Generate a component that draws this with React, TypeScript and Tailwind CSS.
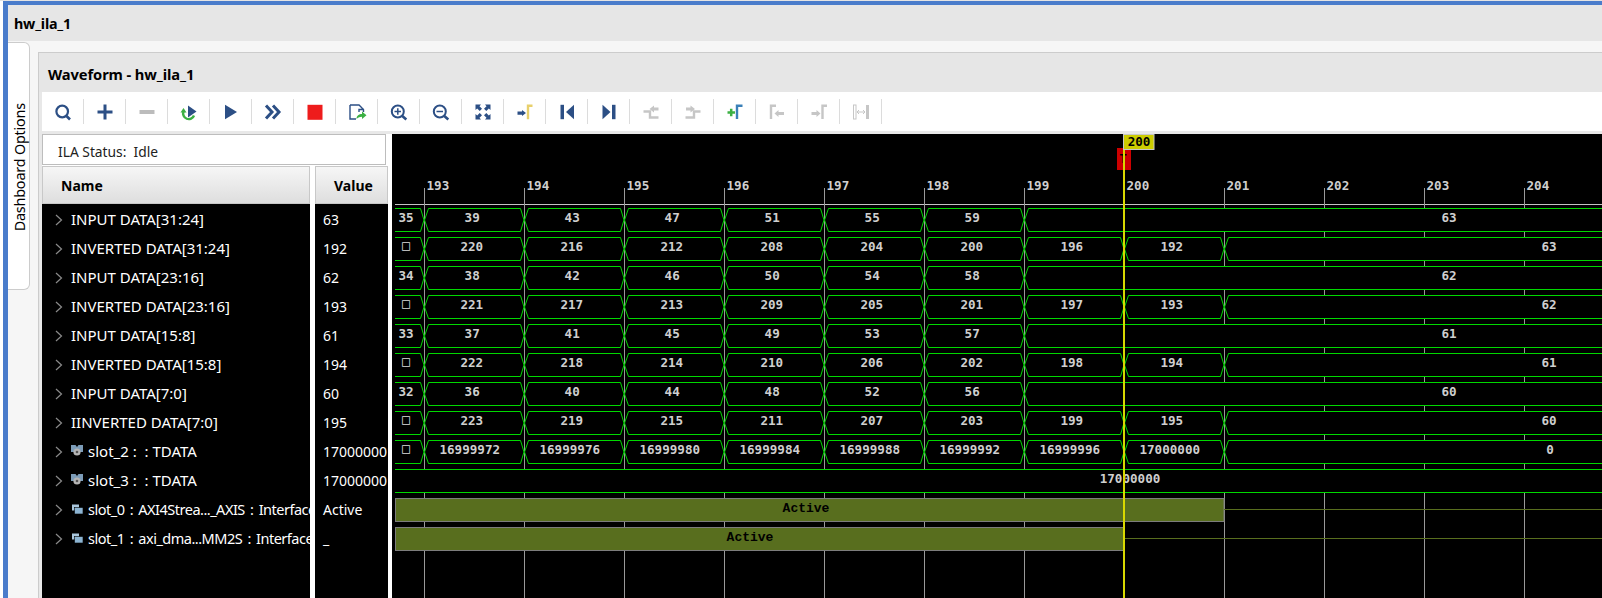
import React from "react";

const NAVY = "#2c4f85";
const GRAY = "#c6c6c6";
const GREEN = "#3cb043";

const icons: React.ReactNode[] = [
  <g key="a" fill="none" stroke={NAVY}><circle cx="11.2" cy="11.5" r="5.8" strokeWidth="2.2" /><path d="M15.5 16L19 19.5" strokeWidth="2.6" /></g>,
  <path key="b" d="M4.5 12H19.5M12 4.5V19.5" stroke={NAVY} strokeWidth="3" fill="none" />,
  <path key="c" d="M4.5 12H19.5" stroke="#bcbcbc" strokeWidth="4" fill="none" />,
  <g key="d"><path d="M11 5.5L19.5 11.5L11 17.5Z" fill={NAVY} /><path d="M6.5 11.5A5.6 5.6 0 1 0 17 15.5" stroke={GREEN} strokeWidth="2.4" fill="none" /><path d="M3.5 12.5L9.5 12.5L6.5 8Z" fill={GREEN} /></g>,
  <path key="e" d="M6 4.8L18 12L6 19.2Z" fill={NAVY} />,
  <path key="f" d="M5 5.5L11 12L5 18.5M12 5.5L18 12L12 18.5" stroke={NAVY} strokeWidth="3" fill="none" />,
  <rect key="g" x="4.5" y="4.8" width="15" height="15" fill="#ee1c1c" />,
  <g key="h"><path d="M14 12V9.5H19M5 5H14L18.5 9.5V12M11 19H5V5" stroke={NAVY} strokeWidth="1.4" fill="none" /><path d="M11.5 19C11.5 15.5 14 14 17 14V11.5L21.5 15.3L17 19V16.8C15 16.8 13 17.5 11.5 19Z" fill={GREEN} /></g>,
  <g key="i" fill="none" stroke={NAVY}><circle cx="10.8" cy="11.5" r="6" strokeWidth="2" /><path d="M15.3 16L19.3 19.5" strokeWidth="2.6" /><path d="M7.5 11.5H14M10.8 8.2V14.8" strokeWidth="1.5" /></g>,
  <g key="j" fill="none" stroke={NAVY}><circle cx="10.8" cy="11.5" r="6" strokeWidth="2" /><path d="M15.3 16L19.3 19.5" strokeWidth="2.6" /><path d="M7.5 11.5H14" strokeWidth="1.5" /></g>,
  <path key="k" fill={NAVY} d="M4.5 4.5H10L8.5 6.2L11 8.7L8.7 11L6.2 8.5L4.5 10ZM19.5 4.5H14L15.5 6.2L13 8.7L15.3 11L17.8 8.5L19.5 10ZM4.5 19.5H10L8.5 17.8L11 15.3L8.7 13L6.2 15.5L4.5 14ZM19.5 19.5H14L15.5 17.8L13 15.3L15.3 13L17.8 15.5L19.5 14Z" />,
  <g key="l"><path d="M4.5 11.5H9V10L13 13L9 16V14.7H4.5Z" fill={NAVY} /><path d="M15 19.2V5.8H19.5" stroke="#e8d06c" strokeWidth="2.4" fill="none" /></g>,
  <g key="m" fill={NAVY}><rect x="5.5" y="4.8" width="3.5" height="14.4" /><path d="M19 4.8V19.2L11 12Z" /></g>,
  <g key="n" fill={NAVY}><path d="M5.5 4.8V19.2L13.5 12Z" /><rect x="15" y="4.8" width="3.5" height="14.4" /></g>,
  <g key="o" fill={GRAY}><path d="M4.5 11.5H11V17.5H19.5" stroke={GRAY} strokeWidth="2.4" fill="none" /><path d="M10.5 9L15 5.5V7.5H19.5V10.5H15V12.5Z" /></g>,
  <g key="p" fill={GRAY}><path d="M4.5 17.5H13V11.5H19.5" stroke={GRAY} strokeWidth="2.4" fill="none" /><path d="M14 9L9.5 5.5V7.5H5V10.5H9.5V12.5Z" /></g>,
  <g key="q"><path d="M4.5 12.5H12M8.2 8.8V16.2" stroke={GREEN} strokeWidth="2.5" fill="none" /><path d="M14 19V5.8H19.5" stroke="#3a80b8" strokeWidth="2.4" fill="none" /></g>,
  <g key="r" fill={GRAY}><path d="M6 19V5.8H11" stroke={GRAY} strokeWidth="2.4" fill="none" /><path d="M9.5 13.5L13.5 10V12H19V15H13.5V17Z" /></g>,
  <g key="s" fill={GRAY}><path d="M4.5 12H9.5V10L13.5 13.5L9.5 17V15H4.5Z" /><path d="M15.5 19V5.8H20" stroke={GRAY} strokeWidth="2.4" fill="none" /></g>,
  <g key="t"><rect x="4.5" y="5" width="2.5" height="14" fill="none" stroke={GRAY} strokeWidth="1" /><rect x="17" y="5" width="3" height="14" fill={GRAY} /><path d="M8 12H16M10 10L8 12L10 14M14 10L16 12L14 14" stroke={GRAY} strokeWidth="1" fill="none" /></g>,
];

const names: [string, "none" | "data" | "intf"][] = [
  ["INPUT DATA[31:24]", "none"],
  ["INVERTED DATA[31:24]", "none"],
  ["INPUT DATA[23:16]", "none"],
  ["INVERTED DATA[23:16]", "none"],
  ["INPUT DATA[15:8]", "none"],
  ["INVERTED DATA[15:8]", "none"],
  ["INPUT DATA[7:0]", "none"],
  ["IINVERTED DATA[7:0]", "none"],
  ["slot_2 :  : TDATA", "data"],
  ["slot_3 :  : TDATA", "data"],
  ["slot_0 : AXI4Strea..._AXIS : Interface", "intf"],
  ["slot_1 : axi_dma...MM2S : Interface", "intf"],
];
const values = ["63", "192", "62", "193", "61", "194", "60", "195", "17000000", "17000000", "Active", "_"];

function Chevron() {
  return (
    <svg width="8" height="12" viewBox="0 0 8 12" className="flex-none">
      <path d="M1 1L6.5 6L1 11" stroke="#8a8a8a" strokeWidth="1.2" fill="none" />
    </svg>
  );
}

function DataIcon() {
  return (
    <svg width="12" height="12" viewBox="0 0 12 12" className="flex-none -mt-[1px]">
      <path d="M0 0H4.5L6 2L7.5 0H12V7H0Z" fill="#7c9cb8" />
      <circle cx="6" cy="7" r="3.6" fill="#b5b5b5" />
      <circle cx="6" cy="7" r="1.3" fill="#555" />
    </svg>
  );
}

function IntfIcon() {
  return (
    <svg width="12" height="12" viewBox="0 0 12 12" className="flex-none">
      <rect x="1" y="0.5" width="7" height="6" fill="#a9c6dc" />
      <rect x="3.5" y="3.5" width="8.5" height="6.5" fill="#8cb4d2" stroke="#000" strokeWidth="0.6" />
    </svg>
  );
}

type Row = { first: string; vals: string[]; last: string; lastFrom: number; lastX: number };
const seq = (a: number, step: number, n: number) => Array.from({ length: n }, (_, i) => String(a + i * step));

const rows: Row[] = [
  { first: "35", vals: seq(39, 4, 6), last: "63", lastFrom: 1024, lastX: 1449 },
  { first: "□", vals: seq(220, -4, 8), last: "63", lastFrom: 1224, lastX: 1549 },
  { first: "34", vals: seq(38, 4, 6), last: "62", lastFrom: 1024, lastX: 1449 },
  { first: "□", vals: seq(221, -4, 8), last: "62", lastFrom: 1224, lastX: 1549 },
  { first: "33", vals: seq(37, 4, 6), last: "61", lastFrom: 1024, lastX: 1449 },
  { first: "□", vals: seq(222, -4, 8), last: "61", lastFrom: 1224, lastX: 1549 },
  { first: "32", vals: seq(36, 4, 6), last: "60", lastFrom: 1024, lastX: 1449 },
  { first: "□", vals: seq(223, -4, 8), last: "60", lastFrom: 1224, lastX: 1549 },
  { first: "□", vals: seq(16999972, 4, 8), last: "0", lastFrom: 1224, lastX: 1550 },
];

const W = "#00d800";
const LABEL = "font-['DejaVu_Sans_Mono',monospace] font-bold text-[12.6px] fill-[#cfcfcf]";
const BOX = "font-['DejaVu_Sans_Mono',monospace] text-[13.5px] fill-[#dcdcdc]";
const ACTIVE = "font-['Liberation_Mono',monospace] font-bold text-[13px] fill-black";

function Bus({ r, i }: { r: Row; i: number }) {
  const top = 208.5 + 29 * i;
  const bot = top + 23;
  const mid = top + 11.5;
  const base = 222 + 29 * i;
  return (
    <g>
      <path d={`M395 ${top}H420.5L424 ${mid}L420.5 ${bot}H395`} fill="#000" stroke={W} />
      <text x="406" y={r.first === "□" ? base - 1 : base} textAnchor="middle" className={r.first === "□" ? BOX : LABEL}>{r.first}</text>
      {r.vals.map((v, k) => {
        const a = 424 + k * 100;
        const b = a + 100;
        return (
          <g key={k}>
            <path d={`M${a + 0.5} ${mid}L${a + 4.5} ${top}H${b - 3.5}L${b} ${mid}L${b - 3.5} ${bot}H${a + 4.5}Z`} fill="#000" stroke={W} />
            <text x={(a + b) / 2 - 1 - 0.4 * v.length} y={base} textAnchor="middle" className={LABEL}>{v}</text>
          </g>
        );
      })}
      <path d={`M1610 ${top}H${r.lastFrom + 4.5}L${r.lastFrom + 0.5} ${mid}L${r.lastFrom + 4.5} ${bot}H1610`} fill="#000" stroke={W} />
      <text x={r.lastX} y={base} textAnchor="middle" className={LABEL}>{r.last}</text>
    </g>
  );
}

function Wave() {
  const ticks = Array.from({ length: 12 }, (_, i) => i);
  return (
    <svg viewBox="392 134 1210 464" className="block w-full h-full bg-black">
      <path d="M395 204.5H1602" stroke="#c4c4c4" />
      {ticks.map((i) => {
        const x = 424.5 + i * 100;
        return (
          <g key={i}>
            <path d={`M${x} 188V598`} stroke="#999" />
            <text x={x + 2} y="190" className={LABEL}>{193 + i}</text>
          </g>
        );
      })}
      {rows.map((r, i) => <Bus key={i} r={r} i={i} />)}
      <rect x="395" y="469.5" width="1215" height="23" fill="#000" />
      <path d="M395 469.5H1610M395 492.5H1610" stroke={W} />
      <text x="1130" y="483" textAnchor="middle" className={LABEL}>17000000</text>

      <rect x="395.5" y="498.5" width="828.5" height="23" fill="#586e1e" stroke="#7c7c7c" />
      <path d="M1224 509.5H1602" stroke="#586e1e" />
      <text x="806" y="512" textAnchor="middle" className={ACTIVE}>Active</text>
      <rect x="395.5" y="527.5" width="728.5" height="23" fill="#586e1e" stroke="#7c7c7c" />
      <path d="M1124 538.5H1602" stroke="#586e1e" />
      <text x="750" y="541" textAnchor="middle" className={ACTIVE}>Active</text>

      <rect x="1117" y="148" width="14" height="22" fill="#cc0000" />
      <text x="1123" y="163" textAnchor="middle" className="font-['Liberation_Mono',monospace] font-bold text-[12px] fill-black">T</text>
      <path d="M1124 134V598" stroke="#d8d800" strokeWidth="2" />
      <rect x="1123.5" y="134.5" width="30.5" height="15" fill="#cccc00" stroke="#c8c8c8" />
      <text x="1139" y="146" textAnchor="middle" className="font-['DejaVu_Sans_Mono',monospace] font-bold text-[12.6px] fill-black">200</text>
    </svg>
  );
}

export default function App() {
  return (
    <div className="w-[1602px] h-[598px] overflow-hidden bg-white flex flex-col font-['Noto_Sans',sans-serif] text-black">
      <div className="h-px flex-none bg-[#e4e4e4]" />
      <div className="h-1 flex-none ml-[3px] bg-[#4a7ccb]" />
      <div className="flex-1 min-h-0 flex pl-[3px]">
        <div className="w-[5px] flex-none bg-[#4a7ccb]" />
        <div className="flex-1 min-w-0 flex flex-col">
          <div className="h-9 flex-none bg-[#e6e6e6] flex items-center pl-[6px] pt-[2px] text-[14.3px] font-bold leading-none tracking-[-0.2px]">hw_ila_1</div>
          <div className="flex-1 min-h-0 bg-[#f6f6f6] flex">
            <div className="w-[30px] flex-none pt-px">
              <div className="w-[22px] h-[248px] bg-white border border-l-0 border-[#cccccc] rounded-tr-md rounded-br-md flex flex-col items-center pt-[60px] pl-[3px]">
                <span className="[writing-mode:vertical-rl] rotate-180 text-[14.4px] leading-none whitespace-nowrap tracking-[-0.2px]">Dashboard Options</span>
              </div>
            </div>
            <div className="flex-1 min-w-0 mt-[11px] border-t border-l border-[#cccccc] bg-[#e8e8e8] pl-[3px] flex flex-col">
              <div className="h-[39px] flex-none -ml-[3px] pl-[9px] pt-[3px] bg-[#e6e6e6] flex items-center text-[14.7px] font-bold leading-none tracking-[-0.1px]">Waveform - hw_ila_1</div>
              <div className="h-[39px] flex-none bg-white flex items-center">
                {icons.map((ic, i) => (
                  <React.Fragment key={i}>
                    <div className="w-[41px] h-full flex-none flex items-center justify-center">
                      <svg width="24" height="24" viewBox="0 0 24 24">{ic}</svg>
                    </div>
                    <div className="w-px h-[25px] flex-none bg-[#dcdcdc]" />
                  </React.Fragment>
                ))}
              </div>
              <div className="flex-1 min-h-0 mt-[3px] flex">
                <div className="w-[350px] flex-none bg-white flex flex-col">
                  <div className="w-[344px] h-[31px] flex-none border border-[#bdbdbd] flex items-center pl-[15px] pt-[6px] text-[13.8px] text-[#222]">ILA Status:&nbsp; Idle</div>
                  <div className="flex-1 min-h-0 mt-px flex">
                    <div className="w-[268px] flex-none flex flex-col">
                      <div className="h-[38px] flex-none bg-gradient-to-b from-[#f6f6f6] to-[#dedede] border border-[#c8c8c8] flex items-center pl-[18px] text-[14px] font-bold">Name</div>
                      <div className="flex-1 bg-black pt-[1px] text-white">
                        {names.map(([n, kind]) => (
                          <div key={n} className="h-[29px] flex items-center pl-[13px] overflow-hidden whitespace-pre">
                            <Chevron />
                            {kind === "none" && <span className="ml-[8px] text-[15px]">{n}</span>}
                            {kind === "data" && <><span className="ml-[8px] flex"><DataIcon /></span><span className="ml-[5px] text-[15px]">{n}</span></>}
                            {kind === "intf" && <><span className="ml-[8px] flex"><IntfIcon /></span><span className="ml-[5px] text-[14.5px] tracking-[-0.5px] [word-spacing:2px]">{n}</span></>}
                          </div>
                        ))}
                      </div>
                    </div>
                    <div className="w-[73px] ml-[5px] flex-none flex flex-col">
                      <div className="h-[38px] flex-none bg-gradient-to-b from-[#f6f6f6] to-[#dedede] border border-[#c8c8c8] flex items-center pl-[18px] text-[14px] font-bold">Value</div>
                      <div className="flex-1 bg-black pt-[1px] text-[14px] text-white">
                        {values.map((v, i) => (
                          <div key={i} className="h-[29px] flex items-center pl-[8px] overflow-hidden whitespace-nowrap">{v}</div>
                        ))}
                      </div>
                    </div>
                  </div>
                </div>
                <div className="flex-1 min-w-0"><Wave /></div>
              </div>
            </div>
          </div>
        </div>
      </div>
    </div>
  );
}
